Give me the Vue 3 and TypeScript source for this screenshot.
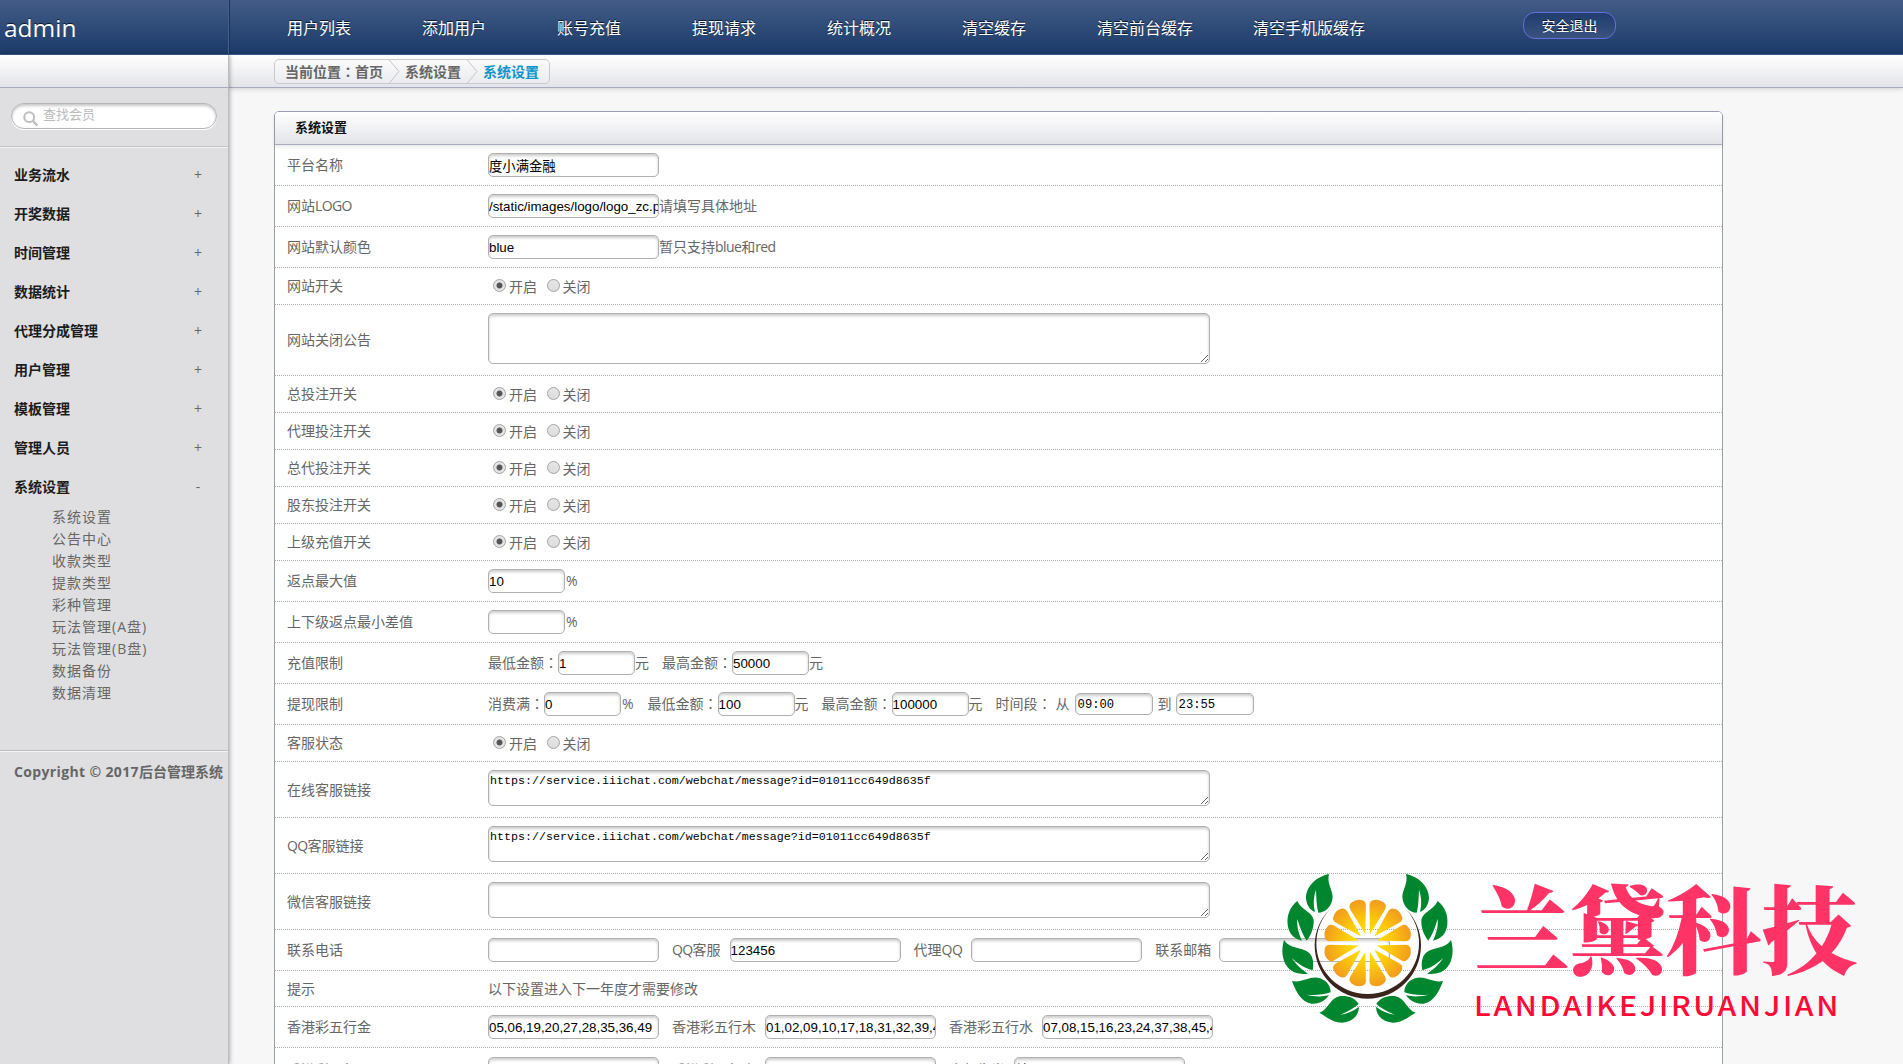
<script setup lang="ts">
interface Part {
  kind: 'text' | 'input' | 'small' | 'time' | 'radio' | 'area' | 'areaTall'
  value?: string
  gap?: number
}
interface Row {
  label: string
  height: number
  parts: Part[]
}

const nav: string[] = ['用户列表', '添加用户', '账号充值', '提现请求', '统计概况', '清空缓存', '清空前台缓存', '清空手机版缓存']
const menu: string[] = ['业务流水', '开奖数据', '时间管理', '数据统计', '代理分成管理', '用户管理', '模板管理', '管理人员', '系统设置']
const submenu: string[] = ['系统设置', '公告中心', '收款类型', '提款类型', '彩种管理', '玩法管理(A盘)', '玩法管理(B盘)', '数据备份', '数据清理']

const t = (value: string, gap = 0): Part => ({ kind: 'text', value, gap })
const i = (value = '', gap = 0): Part => ({ kind: 'input', value, gap })
const s = (value = '', gap = 0): Part => ({ kind: 'small', value, gap })
const time = (value: string, gap = 0): Part => ({ kind: 'time', value, gap })
const toggle = (label: string): Row => ({ label, height: 37, parts: [{ kind: 'radio' }] })
const link = (label: string, value = ''): Row => ({ label, height: 56, parts: [{ kind: 'area', value }] })
const chat = 'https://service.iiichat.com/webchat/message?id=01011cc649d8635f'

// Splits a caption into runs so Latin letters and the full-width colon get their own styling.
const runs = (text = ''): { text: string; cls: string }[] =>
  (text.match(/[A-Za-z]+|：|[^A-Za-z：]+/g) ?? []).map((r) => ({
    text: r,
    cls: r === '：' ? 'colon' : /^[A-Za-z]/.test(r) ? 'latin' : '',
  }))

const rows: Row[] = [
  { label: '平台名称', height: 41, parts: [i('度小满金融')] },
  { label: '网站LOGO', height: 41, parts: [i('/static/images/logo/logo_zc.png'), t('请填写具体地址')] },
  { label: '网站默认颜色', height: 41, parts: [i('blue'), t('暂只支持blue和red')] },
  toggle('网站开关'),
  { label: '网站关闭公告', height: 71, parts: [{ kind: 'areaTall', value: '' }] },
  toggle('总投注开关'),
  toggle('代理投注开关'),
  toggle('总代投注开关'),
  toggle('股东投注开关'),
  toggle('上级充值开关'),
  { label: '返点最大值', height: 41, parts: [s('10'), t('%', 1)] },
  { label: '上下级返点最小差值', height: 41, parts: [s(), t('%', 1)] },
  { label: '充值限制', height: 41, parts: [t('最低金额：'), s('1'), t('元'), t('最高金额：', 13), s('50000'), t('元')] },
  {
    label: '提现限制',
    height: 41,
    parts: [
      t('消费满：'), s('0'), t('%', 1), t('最低金额：', 14), s('100'), t('元'), t('最高金额：', 13), s('100000'), t('元'),
      t('时间段：', 13), t('从', 4), time('09:00', 5), t('到', 5), time('23:55', 4),
    ],
  },
  toggle('客服状态'),
  link('在线客服链接', chat),
  link('QQ客服链接', chat),
  link('微信客服链接'),
  { label: '联系电话', height: 41, parts: [i(), t('QQ客服', 13), i('123456', 9), t('代理QQ', 13), i('', 9), t('联系邮箱', 13), i('', 8)] },
  { label: '提示', height: 36, parts: [t('以下设置进入下一年度才需要修改')] },
  {
    label: '香港彩五行金',
    height: 41,
    parts: [i('05,06,19,20,27,28,35,36,49'), t('香港彩五行木', 13), i('01,02,09,10,17,18,31,32,39,40,47,48', 9), t('香港彩五行水', 13), i('07,08,15,16,23,24,37,38,45,46', 9)],
  },
  { label: '香港彩五行火', height: 43, parts: [i(), t('香港彩五行土', 13), i('', 9), t('今年生肖', 13), i('羊', 9)] },
]

const petals = Array.from({ length: 12 }, (_, n) => n * 30 + 15)
</script>

<template>
  <div class="page">
    <header class="top">
      <div class="brand">admin</div>
      <nav class="nav">
        <a v-for="n in nav" :key="n">{{ n }}</a>
      </nav>
      <a class="logout">安全退出</a>
    </header>

    <div class="body">
      <aside class="side">
        <div class="side-strip"></div>
        <div class="search-box">
          <div class="search">
            <svg width="16" height="16" viewBox="0 0 16 16"><circle cx="6.2" cy="6.2" r="4.9" fill="none" stroke="#bdbdbf" stroke-width="2" /><path d="M9.8 9.8 14.4 14.6" stroke="#bdbdbf" stroke-width="2.3" /></svg>
            <span>查找会员</span>
          </div>
        </div>
        <ul class="menu">
          <li v-for="(m, n) in menu" :key="m"><b>{{ m }}</b><span>{{ n === 8 ? '-' : '+' }}</span></li>
        </ul>
        <ul class="sub">
          <li v-for="m in submenu" :key="m">{{ m }}</li>
        </ul>
        <div class="copy"><span>Copyright © 2017</span>后台管理系统</div>
      </aside>

      <main class="main">
        <div class="crumb-bar">
          <div class="crumbs">
            <span>当前位置<span class="colon">：</span>首页</span>
            <svg width="12" height="25" viewBox="0 0 12 25"><path d="M.5 0 11 12.5.5 25" fill="none" stroke="#c4c4cc" /></svg>
            <span>系统设置</span>
            <svg width="12" height="25" viewBox="0 0 12 25"><path d="M.5 0 11 12.5.5 25" fill="none" stroke="#c4c4cc" /></svg>
            <span class="on">系统设置</span>
          </div>
        </div>

        <section class="panel">
          <h2>系统设置</h2>
          <div class="rows">
            <div v-for="r in rows" :key="r.label" class="row" :style="{ height: r.height + 'px' }">
              <div class="label"><span v-for="(u, k) in runs(r.label)" :key="k" :class="u.cls">{{ u.text }}</span></div>
              <div class="cell">
                <template v-for="(p, k) in r.parts" :key="k">
                  <span v-if="p.kind === 'text'" class="txt" :style="{ marginLeft: p.gap + 'px' }"><span v-for="(u, j) in runs(p.value)" :key="j" :class="u.cls">{{ u.text }}</span></span>
                  <span v-else-if="p.kind === 'radio'" class="radios">
                    <i class="radio on"></i><span>开启</span><i class="radio second"></i><span>关闭</span>
                  </span>
                  <textarea v-else-if="p.kind === 'area' || p.kind === 'areaTall'" :class="p.kind" :value="p.value" spellcheck="false"></textarea>
                  <input v-else type="text" :class="p.kind" :value="p.value" :style="{ marginLeft: p.gap + 'px' }" />
                </template>
              </div>
            </div>
          </div>
        </section>
      </main>
    </div>

    <svg class="mark" width="600" height="180" viewBox="0 0 600 180">
      <defs>
        <radialGradient id="juice" gradientUnits="userSpaceOnUse" cx="0" cy="0" r="134">
          <stop offset=".15" stop-color="#ffe600" />
          <stop offset=".5" stop-color="#fccb0a" />
          <stop offset="1" stop-color="#f19a1f" />
        </radialGradient>
        <g id="half">
          <path d="M177 42C140 50 108 78 108 115C110 138 122 152 135 156C129 132 131 110 138 89C139 112 139 136 145 158C166 158 187 138 188 110C187 88 170 70 177 42Z" />
          <path d="M82 123C60 140 50 165 53 195C57 222 72 236 96 242C86 220 80 200 82 177C89 202 98 225 110 242C126 222 132 200 131 180C127 155 93 150 82 123Z" />
          <path d="M42 240C33 270 36 300 53 322C68 340 92 344 114 341C93 328 77 312 65 294C84 311 103 324 128 331C132 310 130 291 117 278C95 260 59 267 42 240Z" />
          <path d="M66 363C78 395 92 424 124 431C146 434 166 422 177 406C154 411 132 410 109 404C135 407 158 405 182 397C182 374 165 356 142 353C115 350 96 369 66 363Z" />
          <path d="M148 458C169 470 187 488 216 488C244 486 266 470 267 440C250 453 232 461 211 464C232 456 250 446 266 432C255 412 232 406 210 408C179 414 176 449 148 458Z" />
        </g>
      </defs>
      <g transform="scale(.33333)">
        <g fill="#00862f">
          <use href="#half" />
          <use href="#half" transform="translate(585 0) scale(-1 1)" />
        </g>
        <path d="M181 146A159 159 0 0 0 134 255C134 345 205 416 293 416S453 345 453 255A159 159 0 0 0 407 146A155 155 0 0 1 447 250C447 335 378 402 293 402S139 335 139 250A155 155 0 0 1 181 146Z" fill="#3a241b" />
        <g transform="translate(293 249)">
          <path v-for="a in petals" :key="a" :transform="`rotate(${a})`" d="M0-28-24-110Q-28-125-14-130Q0-136 14-130Q28-125 24-110Z" fill="url(#juice)" />
        </g>
      </g>
      <text class="zh" x="204" y="106" textLength="383" lengthAdjust="spacingAndGlyphs">兰黛科技</text>
      <text class="en" x="204" y="156" textLength="367" lengthAdjust="spacingAndGlyphs">LANDAIKEJIRUANJIAN</text>
    </svg>
  </div>
</template>

<style>
html, body { margin: 0; overflow: hidden; }
</style>

<style scoped>
* { box-sizing: border-box; }
.page {
  position: relative;
  width: 1903px;
  height: 1064px;
  overflow: hidden;
  background: #f7f7f7;
  color: #666;
  font: 14px/20px "Open Sans", "Noto Sans CJK SC", sans-serif;
}
ul { list-style: none; margin: 0; padding: 0; }
.colon { font-family: "Noto Sans CJK TC", sans-serif; line-height: 1; }
.latin { letter-spacing: -.6px; }
.top {
  display: flex;
  height: 55px;
  background: linear-gradient(#425c86, #1b3a69);
  border-bottom: 1px solid #3a5d8f;
  color: #fff;
  text-shadow: 0 -1px 0 #0b1a33;
}
.brand {
  width: 229px;
  padding-left: 4px;
  font-size: 24.5px;
  line-height: 56px;
  border-right: 1px solid #46628c;
  box-shadow: 1px 0 0 #17315b;
}
.nav { display: flex; width: 1294px; padding-left: 58px; }
.nav a { min-width: 135px; padding-right: 60px; font-size: 16px; line-height: 56px; white-space: nowrap; }
.logout {
  width: 93px;
  height: 27px;
  margin-top: 12px;
  border: 1px solid #6470dc;
  border-radius: 12px;
  background: linear-gradient(#1f3d6e, #3a527f);
  font-size: 14px;
  line-height: 26px;
  text-align: center;
}
.body { display: flex; height: 1009px; }
.side {
  position: relative;
  width: 229px;
  background: #dfdfe1;
  border-right: 1px solid #bcbcc0;
  box-shadow: 1px 0 4px rgba(0, 0, 0, .3);
}
.side-strip { height: 33px; background: linear-gradient(#fff, #e3e4e9); border-bottom: 1px solid #a6abbf; }
.search-box { height: 59px; padding: 15px 0 0 11px; border-bottom: 1px solid #c2c2c4; box-shadow: 0 1px 0 #f2f2f3; }
.search {
  display: flex;
  width: 206px;
  height: 26px;
  padding: 7px 0 0 11px;
  border: 1px solid #b4b4b6;
  border-radius: 13px;
  background: #fff;
  box-shadow: inset 0 2px 3px rgba(0, 0, 0, .22), 0 1px 0 #fff;
  color: #bbb;
  font-size: 13px;
}
.search span { margin: -7px 0 0 4px; }
.menu { padding-top: 9px; }
.menu li { display: flex; justify-content: space-between; height: 39px; padding: 0 26px 0 14px; line-height: 38px; }
.menu b { color: #1c1c1c; }
.menu span { width: 8px; text-align: center; }
.sub { height: 244px; margin-top: -1px; padding-left: 52px; letter-spacing: 1px; }
.sub li { height: 22px; line-height: 22px; }
.copy { padding: 11px 0 0 14px; border-top: 1px solid #bdbdc0; box-shadow: inset 0 1px 0 #f4f4f5; font-weight: bold; white-space: nowrap; }
.copy span { letter-spacing: .36px; }
.main { width: 1674px; }
.crumb-bar {
  height: 33px;
  padding: 4px 0 0 45px;
  border-bottom: 1px solid #a6abbf;
  background: linear-gradient(#fff, #e3e4e9);
  box-shadow: 0 1px 5px rgba(0, 0, 0, .16);
}
.crumbs {
  display: flex;
  align-items: center;
  width: 276px;
  height: 25px;
  padding-left: 10px;
  border: 1px solid #c8c8cf;
  border-radius: 5px;
  background: linear-gradient(#fafafb, #ebecef);
  font-weight: 600;
  white-space: nowrap;
}
.crumbs svg { margin: 0 5px 0 5px; }
.crumbs .on { color: #0f93cc; }
.panel {
  width: 1449px;
  height: 1000px;
  margin: 23px 0 0 45px;
  border: 1px solid #9aa0b2;
  border-radius: 5px 5px 0 0;
  background: #fff;
}
.panel h2 {
  height: 33px;
  margin: 0;
  padding-left: 20px;
  border-bottom: 1px solid #a6abbf;
  border-radius: 4px 4px 0 0;
  background: linear-gradient(#fff, #e3e4e9);
  box-shadow: 0 2px 4px rgba(0, 0, 0, .1);
  color: #111;
  font-size: 13px;
  line-height: 31px;
}
.row { display: flex; border-bottom: 1px dotted #aaa; }
.label { display: flex; align-items: center; width: 201px; padding-left: 12px; }
.cell { display: flex; align-items: center; padding-left: 12px; white-space: nowrap; }
.row:last-child .label, .row:last-child .txt { padding-top: 1px; }
input, textarea {
  flex: none;
  display: block;
  margin: 0;
  border: 1px solid #b0b0b0;
  border-radius: 5px;
  background: #fff;
  box-shadow: inset 0 2px 3px rgba(0, 0, 0, .2);
  color: #000;
  outline: none;
}
input { height: 24px; padding: 1px 0; font: 13.333px "Liberation Sans", "Noto Sans CJK SC", sans-serif; }
.input { width: 171px; }
.small { width: 77px; }
.time { width: 78px; height: 22px; padding: 2px 0 0 2px; font: 12.2px "Liberation Mono", monospace; }
textarea { width: 722px; padding: 2px 1px; font: 11.667px/16px "Liberation Mono", monospace; }
.area { height: 36px; margin-bottom: 3px; }
.areaTall { height: 51px; margin-bottom: 3px; }
.radios { display: flex; align-items: center; padding: 1px 0 0 4.5px; }
.radio {
  width: 13px;
  height: 13px;
  margin: -3px 3.5px 0 0;
  border: 1px solid #a3a3a3;
  border-radius: 50%;
  background: linear-gradient(#e6e6e6, #dcdcdc);
}
.radio.on { background: radial-gradient(circle, #555 0 2.6px, #e4e4e4 3.4px); }
.radio.second { margin: -3px 3px 0 9.5px; }
.mark { position: absolute; left: 1270px; top: 860px; }
.zh { font: 900 96px "Noto Serif CJK SC", "Noto Sans CJK SC", serif; fill: #ff3366; }
.en { font: 500 27.5px "Noto Sans CJK SC", sans-serif; letter-spacing: 2.4px; fill: #ff0a37; }
</style>
